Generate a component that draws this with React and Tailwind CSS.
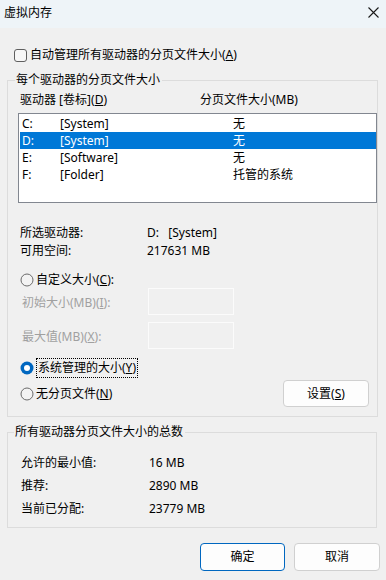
import React from "react";

const font = { fontFamily: '"Noto Sans", "Noto Sans CJK SC", sans-serif' };

function Radio({ checked }) {
  return checked ? (
    <svg width="14" height="14" viewBox="0 0 14 14" className="shrink-0">
      <circle cx="7" cy="7" r="6.5" fill="#0067c0" />
      <circle cx="7" cy="7" r="3" fill="#ffffff" />
    </svg>
  ) : (
    <svg width="14" height="14" viewBox="0 0 14 14" className="shrink-0">
      <circle cx="7" cy="7" r="6" fill="#f3f3f3" stroke="#6b6b6b" strokeWidth="1" />
    </svg>
  );
}

const rows = [
  ["C:", "[System]", "无", false],
  ["D:", "[System]", "无", true],
  ["E:", "[Software]", "无", false],
  ["F:", "[Folder]", "托管的系统", false],
];

export default function App() {
  return (
    <div
      className="w-[386px] h-[580px] bg-[#f0f0f0] text-[12px] leading-[16px] text-black overflow-hidden"
      style={font}
    >
      {/* title bar */}
      <div className="h-[28px] bg-[#eef4f8] flex items-center justify-between pl-[4px] pr-[7px]">
        <span className="leading-[16px] -mt-[3px]">虚拟内存</span>
        <svg width="11" height="11" viewBox="0 0 11 11" className="-mt-[4px]">
          <path d="M0.5 0.5 L10.5 10.5 M10.5 0.5 L0.5 10.5" stroke="#1a1a1a" strokeWidth="1.1" />
        </svg>
      </div>

      {/* auto checkbox */}
      <div className="mt-[19px] h-[16px] flex items-center pl-[14px]">
        <div className="w-[13px] h-[13px] rounded-[3px] border border-[#5f5f5f] bg-[#f7f7f7] shrink-0" />
        <span className="ml-[3px]">
          自动管理所有驱动器的分页文件大小(<u>A</u>)
        </span>
      </div>

      {/* group 1 */}
      <fieldset className="mt-[9px] ml-[7px] w-[370px] border border-[#dcdcdc] pb-[9px]">
        <legend className="ml-[7px] pl-[1px] pr-[2px] leading-[16px]">每个驱动器的分页文件大小</legend>

        <div className="mt-[4px] h-[16px] flex ml-[12px]">
          <span className="w-[180px]">
            驱动器 [卷标](<u>D</u>)
          </span>
          <span>分页文件大小(MB)</span>
        </div>

        <div className="mt-[5px] ml-[10px] w-[359px] h-[90px] border border-[#828790] bg-white pt-[1px]">
          {rows.map(([d, l, s, sel]) => (
            <div
              key={d}
              className={
                "ml-[1px] h-[17px] flex items-center pl-[2px] " +
                (sel ? "bg-[#0078d7] text-white" : "")
              }
            >
              <span className="w-[38px]">{d}</span>
              <span className="w-[173px]">{l}</span>
              <span>{s}</span>
            </div>
          ))}
        </div>

        <div className="mt-[21px] ml-[12px] h-[18px] flex items-center">
          <span className="w-[127px]">所选驱动器:</span>
          <span>D:&nbsp;&nbsp;&nbsp;[System]</span>
        </div>
        <div className="ml-[12px] h-[18px] flex items-center">
          <span className="w-[127px]">可用空间:</span>
          <span>217631 MB</span>
        </div>

        <div className="mt-[12px] ml-[12px] h-[16px] flex items-center">
          <Radio />
          <span className="ml-[2px]">
            自定义大小(<u>C</u>):
          </span>
        </div>

        <div className="ml-[14px] h-[27px] flex items-center text-[#a0a0a0]">
          <span className="w-[126px] mt-[3px]">
            初始大小(MB)(<u>I</u>):
          </span>
          <div className="w-[86px] h-[27px] border border-[#fbfbfb]" />
        </div>
        <div className="mt-[7px] ml-[14px] h-[27px] flex items-center text-[#a0a0a0]">
          <span className="w-[126px] mt-[2px]">
            最大值(MB)(<u>X</u>):
          </span>
          <div className="w-[86px] h-[27px] border border-[#fbfbfb]" />
        </div>

        <div className="mt-[9px] ml-[12px] h-[20px] flex items-center">
          <Radio checked />
          <span className="ml-[2px] h-[20px] px-[1px] flex items-center border border-dotted border-black">
            系统管理的大小(<u>Y</u>)
          </span>
        </div>

        <div className="mt-[2px] ml-[12px] h-[27px] flex items-center">
          <Radio />
          <span className="ml-[2px]">
            无分页文件(<u>N</u>)
          </span>
          <button className="ml-auto mr-[8px] w-[86px] h-[27px] rounded-[4px] border border-[#d0d0d0] bg-[#fdfdfd] flex items-center justify-center leading-[16px]">
            设置(<u>S</u>)
          </button>
        </div>
      </fieldset>

      {/* group 2 */}
      <fieldset className="mt-[7px] ml-[7px] w-[370px] border border-[#dcdcdc] pb-[7px]">
        <legend className="ml-[6px] pl-[1px] pr-[2px] leading-[16px]">所有驱动器分页文件大小的总数</legend>
        <div className="mt-[11px] ml-[13px] h-[23px] flex items-center">
          <span className="w-[128px]">允许的最小值:</span>
          <span>16 MB</span>
        </div>
        <div className="ml-[13px] h-[23px] flex items-center">
          <span className="w-[128px]">推荐:</span>
          <span>2890 MB</span>
        </div>
        <div className="ml-[13px] h-[23px] flex items-center">
          <span className="w-[128px]">当前已分配:</span>
          <span>23779 MB</span>
        </div>
      </fieldset>

      {/* buttons */}
      <div className="mt-[15px] flex justify-end gap-[9px] pr-[6px]">
        <button className="w-[85px] h-[28px] rounded-[4px] border border-[#0067c0] bg-[#fdfdfd] flex items-center justify-center leading-[16px]">
          确定
        </button>
        <button className="w-[86px] h-[28px] rounded-[4px] border border-[#d0d0d0] bg-[#fdfdfd] flex items-center justify-center leading-[16px]">
          取消
        </button>
      </div>
    </div>
  );
}
